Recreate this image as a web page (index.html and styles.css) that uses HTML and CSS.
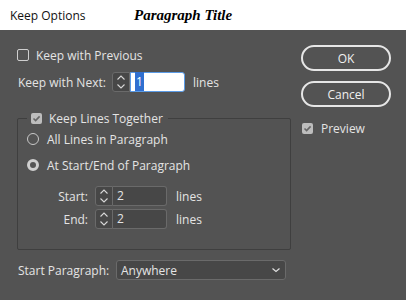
FILE: index.html
```html
<!DOCTYPE html>
<html lang="en">
<head>
  <meta charset="UTF-8" />
  <title>Keep Options</title>
  <link rel="stylesheet" href="styles.css">
</head>
<body>
  <div class="dialog">
    <div class="titlebar">
      <span class="app-title">Keep Options</span>
      <span class="doc-title">Paragraph Title</span>
    </div>
    <div class="panel">
      <div class="main">
        <div class="check-row"><span class="box"></span>Keep with Previous</div>
        <div class="field-row next-row">
          <span class="lbl">Keep with Next:</span>
          <span class="spin"><svg width="16" height="18" viewBox="0 0 16 18"><path d="M4.5 6.5 L8 3 L11.5 6.5 M4.5 11.5 L8 15 L11.5 11.5" fill="none" stroke="#d8d8d8" stroke-width="1.1"/></svg></span>
          <span class="num focus"><span class="sel">1</span></span>
          <span class="unit">lines</span>
        </div>
        <fieldset class="group">
          <legend><span class="box checked"><svg width="11" height="11" viewBox="0 0 11 11"><path d="M2.5 5.5 L4.6 7.6 L8.6 3.4" fill="none" stroke="#666" stroke-width="1.6"/></svg></span>Keep Lines Together</legend>
          <div class="radio-row"><span class="radio"></span>All Lines in Paragraph</div>
          <div class="radio-row second"><span class="radio on"></span>At Start/End of Paragraph</div>
          <div class="field-row sub start-row">
            <span class="lbl short">Start:</span>
            <span class="spin"><svg width="16" height="18" viewBox="0 0 16 18"><path d="M4.5 6.5 L8 3 L11.5 6.5 M4.5 11.5 L8 15 L11.5 11.5" fill="none" stroke="#d8d8d8" stroke-width="1.1"/></svg></span>
            <span class="num">2</span>
            <span class="unit">lines</span>
          </div>
          <div class="field-row sub end-row">
            <span class="lbl short">End:</span>
            <span class="spin"><svg width="16" height="18" viewBox="0 0 16 18"><path d="M4.5 6.5 L8 3 L11.5 6.5 M4.5 11.5 L8 15 L11.5 11.5" fill="none" stroke="#d8d8d8" stroke-width="1.1"/></svg></span>
            <span class="num">2</span>
            <span class="unit">lines</span>
          </div>
        </fieldset>
        <div class="field-row para-row">
          <span class="lbl wide">Start Paragraph:</span>
          <div class="select">Anywhere<svg width="10" height="6" viewBox="0 0 10 6"><path d="M1.5 1.5 L5 4.5 L8.5 1.5" fill="none" stroke="#e0e0e0" stroke-width="1.2"/></svg></div>
        </div>
      </div>
      <div class="side">
        <button class="btn">OK</button>
        <button class="btn cancel">Cancel</button>
        <div class="check-row preview"><span class="box checked"><svg width="11" height="11" viewBox="0 0 11 11"><path d="M2.5 5.5 L4.6 7.6 L8.6 3.4" fill="none" stroke="#666" stroke-width="1.6"/></svg></span>Preview</div>
      </div>
    </div>
  </div>
</body>
</html>
```

FILE: styles.css
```css
body {
  margin: 0;
  padding: 0;
  font-family: "Open Sans", "Noto Sans", sans-serif;
  font-size: 12px;
  background: #535353;
}
.dialog {
  width: 406px;
  height: 300px;
  overflow: hidden;
}
.titlebar {
  height: 30px;
  background: #fff;
  display: flex;
  align-items: center;
  padding-left: 10px;
  color: #111;
}
.app-title {
  width: 124px;
  font-size: 12px;
}
.doc-title {
  font-family: "Liberation Serif", serif;
  font-weight: bold;
  font-style: italic;
  font-size: 15px;
  color: #000;
}
.panel {
  height: 270px;
  display: flex;
  background: #535353;
  color: #e4e4e4;
}
.main {
  width: 274px;
  padding: 15px 0 0 17px;
}
.check-row {
  height: 20px;
  display: flex;
  align-items: center;
}
.box {
  width: 10px;
  height: 10px;
  border: 1px solid #cfcfcf;
  border-radius: 2px;
  margin-right: 7px;
  display: inline-block;
  flex-shrink: 0;
}
.box.checked {
  width: 11px;
  height: 11px;
  border: none;
  background: #bdbdbd;
}
.box svg {
  display: block;
}
.field-row {
  height: 20px;
  display: flex;
  align-items: center;
}
.next-row {
  margin-top: 7px;
}
.lbl {
  width: 94px;
  padding-left: 1px;
}
.spin {
  width: 16px;
  height: 18px;
  border: 1px solid #6a6a6a;
  border-radius: 3px 0 0 3px;
  background: #474747;
}
.spin svg {
  display: block;
}
.num {
  width: 45px;
  height: 18px;
  line-height: 18px;
  padding-left: 7px;
  border: 1px solid #6a6a6a;
  border-left: none;
  border-radius: 0 3px 3px 0;
  background: #474747;
}
.num.focus {
  width: 49px;
  padding-left: 4px;
  background: #fff;
  border: 1px solid #5b9be6;
  color: #fff;
}
.sel {
  background: #2f6fd0;
  padding: 1px 1px;
}
.unit {
  margin-left: 8px;
}
.group {
  margin: 19px 0 0 0;
  padding: 4px 0 20px 9px;
  width: 274px;
  box-sizing: border-box;
  border: 1px solid #3f3f3f;
  border-radius: 2px;
}
.group legend {
  display: flex;
  align-items: center;
  height: 14px;
  margin-left: 0;
  padding: 0 5px 0 4px;
}
.radio-row {
  height: 20px;
  display: flex;
  align-items: center;
}
.radio-row.second {
  margin-top: 6px;
}
.radio {
  width: 10px;
  height: 10px;
  border: 1.5px solid #c8c8c8;
  border-radius: 50%;
  margin-right: 8px;
}
.radio.on {
  width: 6px;
  height: 6px;
  border: 3.5px solid #cfcfcf;
  background: #555;
}
.start-row {
  margin-top: 11px;
}
.end-row {
  margin-top: 3px;
}
.lbl.short {
  width: 61px;
  padding: 0;
  text-align: right;
  margin-right: 7px;
}
.sub .num {
  width: 49px;
  padding-left: 4px;
}
.sub .unit {
  margin-left: 9px;
}
.para-row {
  margin-top: 10px;
}
.lbl.wide {
  width: 98px;
}
.select {
  width: 160px;
  height: 18px;
  padding: 0 4px 0 4px;
  border: 1px solid #6a6a6a;
  border-radius: 3px;
  background: #474747;
  display: flex;
  align-items: center;
  justify-content: space-between;
}
.side {
  margin-left: 10px;
  padding-top: 15px;
  width: 90px;
}
.btn {
  display: block;
  width: 90px;
  height: 26px;
  border: 2px solid #e6e6e6;
  border-radius: 13px;
  background: transparent;
  color: #f0f0f0;
  font-family: "Open Sans", "Noto Sans", sans-serif;
  font-size: 12px;
  padding: 0;
}
.btn.cancel {
  margin-top: 10px;
}
.preview {
  margin-top: 11px;
  padding-left: 1px;
}
.preview .box {
  margin-right: 8px;
}
```
